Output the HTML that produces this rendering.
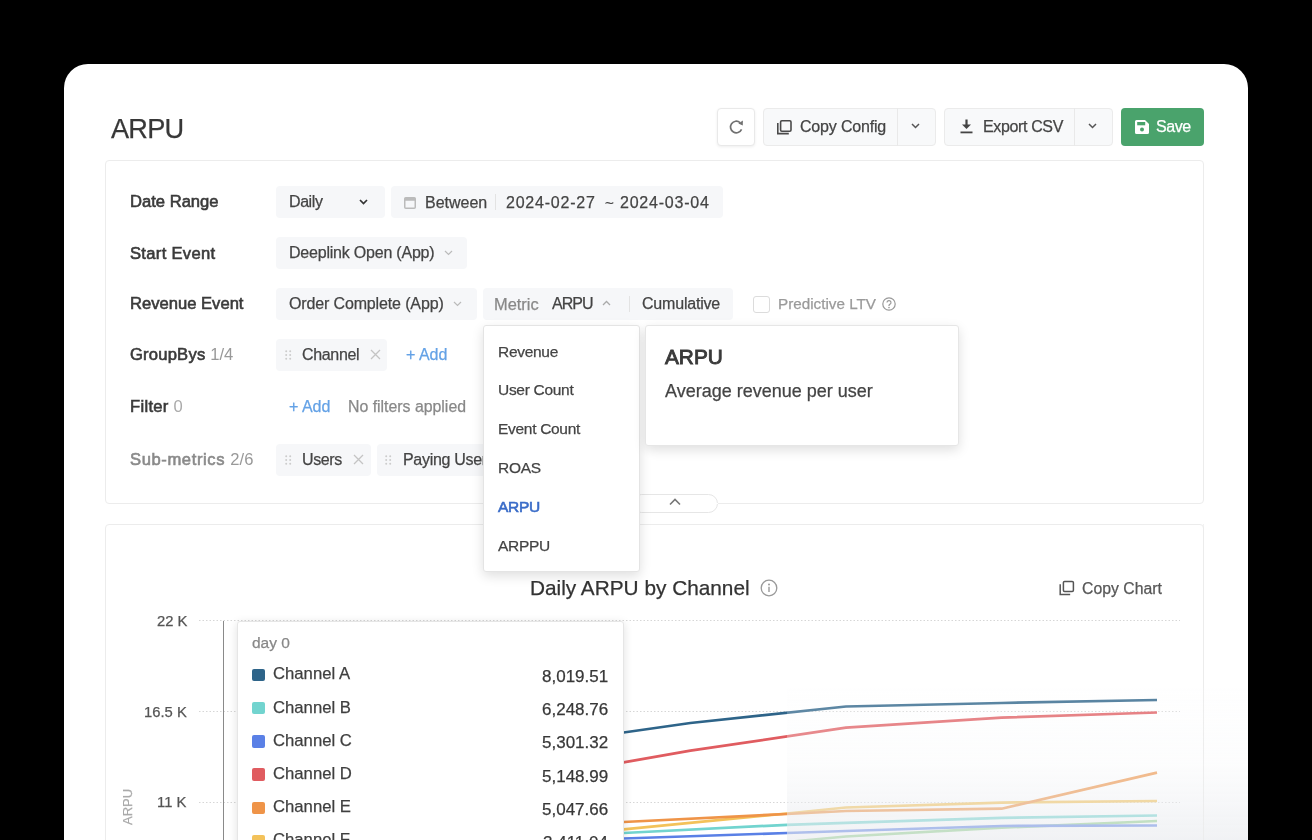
<!DOCTYPE html>
<html><head><meta charset="utf-8">
<style>
*{box-sizing:border-box;margin:0;padding:0}
html,body{width:1312px;height:840px;overflow:hidden;background:#000;font-family:"Liberation Sans",sans-serif;color:#333;position:relative}
.abs{position:absolute}
.t{position:absolute;white-space:nowrap;line-height:1;will-change:transform;-webkit-text-stroke:0.25px currentColor}
svg.abs{overflow:visible}
</style></head><body>
<div class="abs" style="left:64px;top:64px;width:1184px;height:900px;background:#fff;border-radius:24px"></div>
<div class="t" style="left:111.3px;top:114.78px;font-size:27.2px;color:#383838;font-weight:normal;letter-spacing:-0.8px">ARPU</div>
<div class="abs" style="left:717px;top:108px;width:38px;height:38px;background:#fff;border:1px solid #e9e9e9;border-radius:4px;box-shadow:0 1px 3px rgba(0,0,0,.07)"></div>
<svg class="abs" style="left:728px;top:119px;" width="16" height="16" viewBox="0 0 16 16"><path d="M13.56 10.45A5.8 5.8 0 1 1 12.03 3.56" fill="none" stroke="#707070" stroke-width="1.7"/><path d="M10.3 4.6L14.9 1.6L14.8 6.4Z" fill="#707070"/></svg>
<div class="abs" style="left:763px;top:108px;width:173px;height:38px;background:#f8f9fa;border:1px solid #ebebeb;border-radius:4px"></div>
<div class="abs" style="left:897px;top:108px;width:1px;height:38px;background:#e9e9e9"></div>
<svg class="abs" style="left:776px;top:119px;" width="17" height="16" viewBox="0 0 17 16"><rect x="4.6" y="1.8" width="10.4" height="10.4" rx="1.2" fill="none" stroke="#4a4a4a" stroke-width="1.6"/><path d="M1.8 4v10.6h11" fill="none" stroke="#4a4a4a" stroke-width="1.6"/></svg>
<div class="t" style="left:800.3px;top:119.46px;font-size:16px;color:#444;font-weight:normal;letter-spacing:-0.18px">Copy Config</div>
<svg class="abs" style="left:911px;top:123px;" width="9" height="6" viewBox="0 0 9 6"><path d="M1 1l3.5 3.5L8 1" fill="none" stroke="#555" stroke-width="1.5"/></svg>
<div class="abs" style="left:944px;top:108px;width:169px;height:38px;background:#f8f9fa;border:1px solid #ebebeb;border-radius:4px"></div>
<div class="abs" style="left:1074px;top:108px;width:1px;height:38px;background:#e9e9e9"></div>
<svg class="abs" style="left:960px;top:119px;" width="13" height="15" viewBox="0 0 13 15"><path d="M6.5 0.5v7" stroke="#444" stroke-width="2.2"/><path d="M2 5.5h9L6.5 10z" fill="#444"/><rect x="0.5" y="12.5" width="12" height="1.8" fill="#444"/></svg>
<div class="t" style="left:983.2px;top:119.46px;font-size:16px;color:#444;font-weight:normal;letter-spacing:-0.36px">Export CSV</div>
<svg class="abs" style="left:1088px;top:123px;" width="9" height="6" viewBox="0 0 9 6"><path d="M1 1l3.5 3.5L8 1" fill="none" stroke="#555" stroke-width="1.5"/></svg>
<div class="abs" style="left:1121px;top:108px;width:83px;height:38px;background:#4aa36c;border-radius:4px"></div>
<svg class="abs" style="left:1135px;top:120px;" width="14" height="14" viewBox="0 0 14 14"><path d="M0 1.5A1.5 1.5 0 0 1 1.5 0H10l4 4v8.5A1.5 1.5 0 0 1 12.5 14h-11A1.5 1.5 0 0 1 0 12.5z" fill="#fff"/><rect x="2.2" y="2" width="8" height="3.3" fill="#4aa36c"/><circle cx="7" cy="9.5" r="2" fill="#4aa36c"/></svg>
<div class="t" style="left:1156px;top:119.46px;font-size:16px;color:#fff;font-weight:normal;letter-spacing:-0.45px">Save</div>
<div class="abs" style="left:105px;top:160px;width:1099px;height:344px;border:1px solid #ececec;border-radius:4px"></div>
<div class="t" style="left:130px;top:194.45px;font-size:16.6px;color:#3a3a3a;font-weight:normal;-webkit-text-stroke:0.6px currentColor;">Date Range</div>
<div class="t" style="left:130px;top:245.95px;font-size:16.6px;color:#3a3a3a;font-weight:normal;-webkit-text-stroke:0.6px currentColor;letter-spacing:0.3px">Start Event</div>
<div class="t" style="left:130px;top:296.45px;font-size:16.6px;color:#3a3a3a;font-weight:normal;-webkit-text-stroke:0.6px currentColor;">Revenue Event</div>
<div class="t" style="left:130px;top:346.95px;font-size:16.6px;color:#3a3a3a;font-weight:normal;-webkit-text-stroke:0.6px currentColor;letter-spacing:0.2px">GroupBys <span style="-webkit-text-stroke:0;letter-spacing:0;color:#999">1/4</span></div>
<div class="t" style="left:130px;top:399.05px;font-size:16.6px;color:#3a3a3a;font-weight:normal;-webkit-text-stroke:0.6px currentColor;letter-spacing:0.3px">Filter <span style="-webkit-text-stroke:0;color:#aaa">0</span></div>
<div class="t" style="left:130px;top:451.95px;font-size:16.6px;color:#8a8a8a;font-weight:normal;-webkit-text-stroke:0.6px currentColor;letter-spacing:0.6px">Sub-metrics <span style="-webkit-text-stroke:0;letter-spacing:0;color:#999">2/6</span></div>
<div class="abs" style="left:276px;top:186px;width:109px;height:32px;background:#f6f7f9;border-radius:4px"></div>
<div class="t" style="left:288.8px;top:194.26px;font-size:16px;color:#444;font-weight:normal;letter-spacing:-0.42px">Daily</div>
<svg class="abs" style="left:359px;top:199px;" width="9" height="6" viewBox="0 0 9 6"><path d="M1 1l3.5 3.5L8 1" fill="none" stroke="#333" stroke-width="1.7"/></svg>
<div class="abs" style="left:391px;top:186px;width:332px;height:32px;background:#f6f7f9;border-radius:4px"></div>
<svg class="abs" style="left:404px;top:196px;" width="12" height="13" viewBox="0 0 12 13"><rect x="0.75" y="1.75" width="10.5" height="10.5" rx="1" fill="none" stroke="#bbb" stroke-width="1.5"/><rect x="0.75" y="1.75" width="10.5" height="3" fill="#bbb"/></svg>
<div class="t" style="left:425px;top:194.96px;font-size:16px;color:#444;font-weight:normal;">Between</div>
<div class="abs" style="left:495px;top:194px;width:1px;height:16px;background:#e3e3e3"></div>
<div class="t" style="left:505.7px;top:194.96px;font-size:16px;color:#444;font-weight:normal;letter-spacing:0.78px">2024-02-27</div>
<div class="t" style="left:604.5px;top:194.80px;font-size:15px;color:#444;font-weight:normal;">~</div>
<div class="t" style="left:619.6px;top:194.96px;font-size:16px;color:#444;font-weight:normal;letter-spacing:0.78px">2024-03-04</div>
<div class="abs" style="left:276px;top:237px;width:191px;height:32px;background:#f6f7f9;border-radius:4px"></div>
<div class="t" style="left:288.8px;top:245.46px;font-size:16px;color:#444;font-weight:normal;letter-spacing:-0.21px">Deeplink Open (App)</div>
<svg class="abs" style="left:444px;top:250px;" width="9" height="6" viewBox="0 0 9 6"><path d="M1 1l3.5 3.5L8 1" fill="none" stroke="#bbb" stroke-width="1.2"/></svg>
<div class="abs" style="left:276px;top:288px;width:201px;height:32px;background:#f6f7f9;border-radius:4px"></div>
<div class="t" style="left:288.8px;top:296.46px;font-size:16px;color:#444;font-weight:normal;letter-spacing:-0.14px">Order Complete (App)</div>
<svg class="abs" style="left:453px;top:301px;" width="9" height="6" viewBox="0 0 9 6"><path d="M1 1l3.5 3.5L8 1" fill="none" stroke="#bbb" stroke-width="1.2"/></svg>
<div class="abs" style="left:483px;top:288px;width:250px;height:32px;background:#f6f7f9;border-radius:4px"></div>
<div class="t" style="left:494px;top:295.62px;font-size:16.4px;color:#888;font-weight:normal;">Metric</div>
<div class="t" style="left:551.5px;top:295.96px;font-size:16px;color:#444;font-weight:normal;letter-spacing:-1px">ARPU</div>
<svg class="abs" style="left:602px;top:300px;" width="9" height="6" viewBox="0 0 9 6"><path d="M1 5l3.5-3.5L8 5" fill="none" stroke="#aaa" stroke-width="1.3"/></svg>
<div class="abs" style="left:629px;top:296px;width:1px;height:16px;background:#e3e3e3"></div>
<div class="t" style="left:642px;top:295.96px;font-size:16px;color:#444;font-weight:normal;letter-spacing:-0.2px">Cumulative</div>
<div class="abs" style="left:753px;top:296px;width:17px;height:17px;background:#fff;border:1px solid #dcdcdc;border-radius:3px"></div>
<div class="t" style="left:778px;top:295.89px;font-size:15.25px;color:#9a9a9a;font-weight:normal;">Predictive LTV</div>
<svg class="abs" style="left:882px;top:297px;" width="14" height="14" viewBox="0 0 14 14"><circle cx="7" cy="7" r="6.2" fill="none" stroke="#999" stroke-width="1.2"/><path d="M5 5.6a2 2 0 1 1 2.8 1.8c-.6.3-.8.6-.8 1.2v.4" fill="none" stroke="#999" stroke-width="1.2"/><circle cx="7" cy="10.6" r=".8" fill="#999"/></svg>
<div class="abs" style="left:276px;top:339px;width:111px;height:32px;background:#f6f7f9;border-radius:4px"></div>
<svg class="abs" style="left:285px;top:350px;" width="7" height="10" viewBox="0 0 7 10"><circle cx="1.2" cy="1.2" r="1" fill="#ccc"/><circle cx="1.2" cy="5" r="1" fill="#ccc"/><circle cx="1.2" cy="8.8" r="1" fill="#ccc"/><circle cx="5.2" cy="1.2" r="1" fill="#ccc"/><circle cx="5.2" cy="5" r="1" fill="#ccc"/><circle cx="5.2" cy="8.8" r="1" fill="#ccc"/></svg>
<div class="t" style="left:301.7px;top:347.46px;font-size:16px;color:#444;font-weight:normal;letter-spacing:-0.33px">Channel</div>
<svg class="abs" style="left:370px;top:349px;" width="11" height="11" viewBox="0 0 11 11"><path d="M1 1L10 10M10 1L1 10" stroke="#c4c4c4" stroke-width="1.3"/></svg>
<div class="t" style="left:406px;top:347.46px;font-size:16px;color:#64a2e6;font-weight:normal;">+ Add</div>
<div class="t" style="left:288.5px;top:398.96px;font-size:16px;color:#64a2e6;font-weight:normal;">+ Add</div>
<div class="t" style="left:347.5px;top:399.08px;font-size:15.85px;color:#888;font-weight:normal;">No filters applied</div>
<div class="abs" style="left:276px;top:444px;width:95px;height:32px;background:#f6f7f9;border-radius:4px"></div>
<svg class="abs" style="left:285px;top:455px;" width="7" height="10" viewBox="0 0 7 10"><circle cx="1.2" cy="1.2" r="1" fill="#ccc"/><circle cx="1.2" cy="5" r="1" fill="#ccc"/><circle cx="1.2" cy="8.8" r="1" fill="#ccc"/><circle cx="5.2" cy="1.2" r="1" fill="#ccc"/><circle cx="5.2" cy="5" r="1" fill="#ccc"/><circle cx="5.2" cy="8.8" r="1" fill="#ccc"/></svg>
<div class="t" style="left:301.7px;top:452.26px;font-size:16px;color:#444;font-weight:normal;letter-spacing:-0.36px">Users</div>
<svg class="abs" style="left:352.8px;top:453.5px;" width="11" height="11" viewBox="0 0 11 11"><path d="M1 1L10 10M10 1L1 10" stroke="#c4c4c4" stroke-width="1.3"/></svg>
<div class="abs" style="left:377px;top:444px;width:120px;height:32px;background:#f6f7f9;border-radius:4px"></div>
<svg class="abs" style="left:385px;top:455px;" width="7" height="10" viewBox="0 0 7 10"><circle cx="1.2" cy="1.2" r="1" fill="#ccc"/><circle cx="1.2" cy="5" r="1" fill="#ccc"/><circle cx="1.2" cy="8.8" r="1" fill="#ccc"/><circle cx="5.2" cy="1.2" r="1" fill="#ccc"/><circle cx="5.2" cy="5" r="1" fill="#ccc"/><circle cx="5.2" cy="8.8" r="1" fill="#ccc"/></svg>
<div class="t" style="left:402.5px;top:452.26px;font-size:16px;color:#444;font-weight:normal;letter-spacing:-0.3px">Paying Users</div>
<div class="abs" style="left:632px;top:494px;width:86px;height:19px;background:#fff;border:1px solid #e6e6e6;border-radius:10px"></div>
<div class="abs" style="left:632px;top:503px;width:86px;height:1px;background:#fff"></div>
<svg class="abs" style="left:669px;top:498px;" width="12" height="8" viewBox="0 0 12 8"><path d="M1 6.5l5-5 5 5" fill="none" stroke="#777" stroke-width="1.6"/></svg>
<div class="abs" style="left:105px;top:524px;width:1099px;height:400px;border:1px solid #ececec;border-radius:4px"></div>
<div class="t" style="left:530px;top:578.09px;font-size:20.8px;color:#333;font-weight:normal;">Daily ARPU by Channel</div>
<svg class="abs" style="left:760px;top:579px;" width="18" height="18" viewBox="0 0 18 18"><circle cx="9" cy="9" r="7.8" fill="none" stroke="#999" stroke-width="1.3"/><circle cx="9" cy="5.4" r="1" fill="#999"/><path d="M9 7.8v5.2" stroke="#999" stroke-width="1.4"/></svg>
<svg class="abs" style="left:1059px;top:580px;" width="16" height="16" viewBox="0 0 16 16"><rect x="4.4" y="1.4" width="10" height="10" rx="1.2" fill="none" stroke="#555" stroke-width="1.5"/><path d="M1.2 4.2v10.4h10" fill="none" stroke="#555" stroke-width="1.5"/></svg>
<div class="t" style="left:1081.5px;top:580.63px;font-size:15.8px;color:#575757;font-weight:normal;">Copy Chart</div>
<div class="t" style="left:157px;top:613.77px;font-size:14.8px;color:#555;font-weight:normal;">22 K</div>
<div class="t" style="left:144px;top:704.57px;font-size:14.8px;color:#555;font-weight:normal;">16.5 K</div>
<div class="t" style="left:157.3px;top:795.17px;font-size:14.8px;color:#555;font-weight:normal;">11 K</div>
<div class="t" style="left:110px;top:800px;width:36px;height:14px;font-size:13px;color:#aaa;transform:rotate(-90deg);transform-origin:center;text-align:center;line-height:14px">ARPU</div>
<svg class="abs" style="left:0px;top:0px;" width="1312" height="840" viewBox="0 0 1312 840"><line x1="199" y1="620.5" x2="1180" y2="620.5" stroke="#d6d6d6" stroke-width="1" stroke-dasharray="1.5 2"/><line x1="199" y1="711.5" x2="1180" y2="711.5" stroke="#d6d6d6" stroke-width="1" stroke-dasharray="1.5 2"/><line x1="199" y1="802.5" x2="1180" y2="802.5" stroke="#d6d6d6" stroke-width="1" stroke-dasharray="1.5 2"/><polyline points="560,741 623.6,732.5 690.4,723 846,706.5 1001.6,703 1157,700" fill="none" stroke="#2e6489" stroke-width="2.7" stroke-linejoin="round"/><polyline points="560,772 623.6,762.3 690.4,750.7 846,727.7 1001.6,717.7 1157,712.5" fill="none" stroke="#e05c60" stroke-width="2.7" stroke-linejoin="round"/><polyline points="700,850 846,836.5 1001.6,827.7 1157,821" fill="none" stroke="#8fcf8a" stroke-width="2.7" stroke-linejoin="round"/><polyline points="560,842 623.6,838.5 787,833 846,831 1001.6,826 1157,825.5" fill="none" stroke="#5a80e6" stroke-width="2.7" stroke-linejoin="round"/><polyline points="560,836 623.6,833 787,824.8 846,822.8 1001.6,817.8 1157,815.5" fill="none" stroke="#72d4cf" stroke-width="2.7" stroke-linejoin="round"/><polyline points="560,836 623.6,829.3 787,813.5 846,807.5 1001.6,802.6 1157,801" fill="none" stroke="#f3c25a" stroke-width="2.7" stroke-linejoin="round"/><polyline points="560,825 623.6,822 787,814 846,811 1001.6,808.7 1157,772.6" fill="none" stroke="#ef9448" stroke-width="2.7" stroke-linejoin="round"/><line x1="223.5" y1="621" x2="223.5" y2="840" stroke="#8a8a8a" stroke-width="1"/></svg>
<div class="abs" style="left:787px;top:688px;width:461px;height:152px;background:linear-gradient(to bottom, rgba(252,252,253,0.18), rgba(248,249,250,0.36) 50%, rgba(232,234,238,0.62))"></div>
<div class="abs" style="left:1203px;top:524px;width:1px;height:316px;background:#ececec;opacity:.7"></div>
<div class="abs" style="left:237px;top:621px;width:387px;height:260px;background:#fff;border:1px solid #e6e6e6;border-radius:3px;box-shadow:0 2px 10px rgba(0,0,0,.12)"></div>
<div class="t" style="left:252px;top:634.88px;font-size:15.5px;color:#888;font-weight:normal;">day 0</div>
<div class="abs" style="left:252px;top:668.75px;width:12.5px;height:12.5px;background:#2e6489;border-radius:2px"></div>
<div class="t" style="left:272.5px;top:666.36px;font-size:16.7px;color:#3f3f3f;font-weight:normal;">Channel A</div>
<div class="t" style="right:704px;top:667.91px;font-size:17px;color:#383838">8,019.51</div>
<div class="abs" style="left:252px;top:701.95px;width:12.5px;height:12.5px;background:#72d4cf;border-radius:2px"></div>
<div class="t" style="left:272.5px;top:699.56px;font-size:16.7px;color:#3f3f3f;font-weight:normal;">Channel B</div>
<div class="t" style="right:704px;top:701.11px;font-size:17px;color:#383838">6,248.76</div>
<div class="abs" style="left:252px;top:735.15px;width:12.5px;height:12.5px;background:#5a80e6;border-radius:2px"></div>
<div class="t" style="left:272.5px;top:732.76px;font-size:16.7px;color:#3f3f3f;font-weight:normal;">Channel C</div>
<div class="t" style="right:704px;top:734.31px;font-size:17px;color:#383838">5,301.32</div>
<div class="abs" style="left:252px;top:768.35px;width:12.5px;height:12.5px;background:#e05c60;border-radius:2px"></div>
<div class="t" style="left:272.5px;top:765.96px;font-size:16.7px;color:#3f3f3f;font-weight:normal;">Channel D</div>
<div class="t" style="right:704px;top:767.51px;font-size:17px;color:#383838">5,148.99</div>
<div class="abs" style="left:252px;top:801.55px;width:12.5px;height:12.5px;background:#ef9448;border-radius:2px"></div>
<div class="t" style="left:272.5px;top:799.16px;font-size:16.7px;color:#3f3f3f;font-weight:normal;">Channel E</div>
<div class="t" style="right:704px;top:800.71px;font-size:17px;color:#383838">5,047.66</div>
<div class="abs" style="left:252px;top:834.75px;width:12.5px;height:12.5px;background:#f3c25a;border-radius:2px"></div>
<div class="t" style="left:272.5px;top:832.36px;font-size:16.7px;color:#3f3f3f;font-weight:normal;">Channel F</div>
<div class="t" style="right:704px;top:833.91px;font-size:17px;color:#383838">3,411.04</div>
<div class="abs" style="left:483px;top:325px;width:157px;height:247px;background:#fff;border:1px solid #e4e4e4;border-radius:3px;box-shadow:0 4px 12px rgba(0,0,0,.13)"></div>
<div class="t" style="left:497.5px;top:343.68px;font-size:15.5px;color:#444;font-weight:normal;letter-spacing:-0.3px">Revenue</div>
<div class="t" style="left:497.5px;top:382.48px;font-size:15.5px;color:#444;font-weight:normal;letter-spacing:-0.3px">User Count</div>
<div class="t" style="left:497.5px;top:421.28px;font-size:15.5px;color:#444;font-weight:normal;letter-spacing:-0.3px">Event Count</div>
<div class="t" style="left:497.5px;top:460.08px;font-size:15.5px;color:#444;font-weight:normal;letter-spacing:-0.3px">ROAS</div>
<div class="t" style="left:497.5px;top:498.88px;font-size:15.5px;color:#3a6cc8;font-weight:normal;-webkit-text-stroke:0.6px currentColor;letter-spacing:-0.3px">ARPU</div>
<div class="t" style="left:497.5px;top:537.68px;font-size:15.5px;color:#444;font-weight:normal;letter-spacing:-0.3px">ARPPU</div>
<div class="abs" style="left:645px;top:325px;width:314px;height:121px;background:#fff;border:1px solid #e6e6e6;border-radius:3px;box-shadow:0 4px 12px rgba(0,0,0,.13)"></div>
<div class="t" style="left:665px;top:347.19px;font-size:20.8px;color:#3a3a3a;font-weight:normal;-webkit-text-stroke:0.9px currentColor">ARPU</div>
<div class="t" style="left:665px;top:382.26px;font-size:18px;color:#444;font-weight:normal;">Average revenue per user</div>
</body></html>
